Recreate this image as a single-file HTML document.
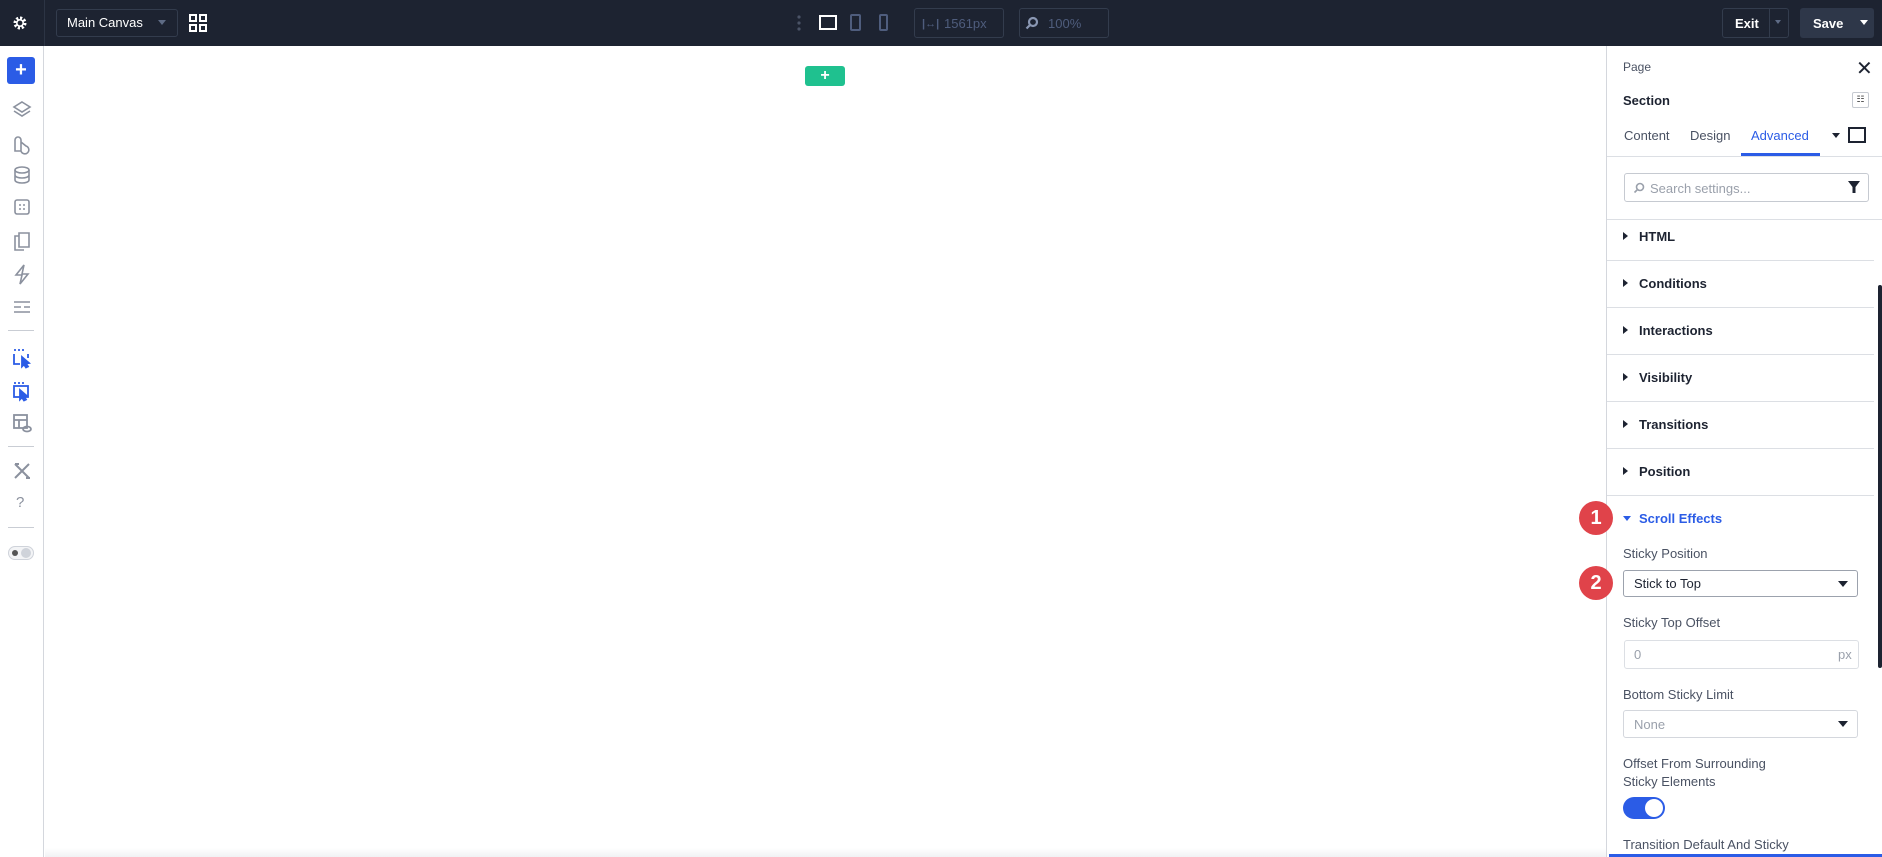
<!DOCTYPE html>
<html><head><meta charset="utf-8"><style>
*{box-sizing:border-box;margin:0;padding:0}
body{width:1882px;height:857px;overflow:hidden;background:#fff;font-family:"Liberation Sans",sans-serif;position:relative}
.a{position:absolute}
.top{left:0;top:0;width:1882px;height:46px;background:#1d2331}
.box{border:1px solid #333c4d;border-radius:3px}
.tb{color:#fff;font-size:13px}
.side{left:0;top:46px;width:44px;height:811px;border-right:1px solid #d4d7dd;background:#fff}
.sep{left:8px;width:26px;height:1px;background:#c9cdd4}
.panel{left:1606px;top:46px;width:276px;height:811px;border-left:1px solid #d4d7dd;background:#fff}
.lbl{font-size:13px;color:#4a5263}
.item{left:1639px;font-size:13px;font-weight:bold;color:#1d2331}
.tri{width:0;height:0;border-top:4px solid transparent;border-bottom:4px solid transparent;border-left:5px solid #1d2331}
.hl{left:1607px;width:267px;height:1px;background:#dcdfe4}
.badge{width:34px;height:34px;border-radius:50%;background:#e0434a;color:#fff;font-weight:bold;font-size:20px;text-align:center;line-height:34px}
.sel{border:1px solid #c6cad1;border-radius:3px;font-size:13px}
.dn{width:0;height:0;border-left:5px solid transparent;border-right:5px solid transparent;border-top:6px solid #1d2331}
</style></head><body>
<div class="a top"></div>
<div class="a" style="left:44px;top:0;width:1px;height:46px;background:#2c3444"></div>
<svg class="a" style="left:12px;top:15px" width="16" height="16" viewBox="0 0 16 16"><circle cx="8" cy="8" r="5" fill="none" stroke="#fff" stroke-width="3" stroke-dasharray="2.2 1.7"/><circle cx="8" cy="8" r="3.2" fill="none" stroke="#fff" stroke-width="1.6"/></svg>
<div class="a box" style="left:56px;top:9px;width:122px;height:28px"></div>
<div class="a tb" style="left:67px;top:15px">Main Canvas</div>
<div class="a" style="left:158px;top:20px;border-left:4px solid transparent;border-right:4px solid transparent;border-top:5px solid #5e6b85"></div>
<svg class="a" style="left:189px;top:14px" width="19" height="19"><g fill="none" stroke="#fff" stroke-width="2"><rect x="1" y="1" width="6" height="6"/><rect x="11" y="1" width="6" height="6"/><rect x="1" y="11" width="6" height="6"/><rect x="11" y="11" width="6" height="6"/></g></svg>
<svg class="a" style="left:797px;top:14px" width="4" height="18"><g fill="#4a5366"><circle cx="2" cy="3" r="1.6"/><circle cx="2" cy="9" r="1.6"/><circle cx="2" cy="15" r="1.6"/></g></svg>
<div class="a" style="left:819px;top:15px;width:18px;height:15px;border:2px solid #fff"></div>
<div class="a" style="left:850px;top:14px;width:11px;height:17px;border:2px solid #4f5d7d;border-radius:2px"></div>
<div class="a" style="left:879px;top:14px;width:9px;height:17px;border:2px solid #4f5d7d;border-radius:2px"></div>
<div class="a box" style="left:914px;top:8px;width:90px;height:30px"></div>
<div class="a" style="left:922px;top:18px;color:#4f5d7d;font-size:11px;font-weight:bold">|↔|</div>
<div class="a" style="left:944px;top:16px;color:#4f5d7d;font-size:13px">1561px</div>
<div class="a box" style="left:1019px;top:8px;width:90px;height:30px"></div>
<svg class="a" style="left:1025px;top:16px" width="14" height="14"><circle cx="8" cy="6" r="4" fill="none" stroke="#8a97b3" stroke-width="2.2"/><line x1="5" y1="9" x2="1.5" y2="12.5" stroke="#8a97b3" stroke-width="2.2"/></svg>
<div class="a" style="left:1048px;top:16px;color:#4f5d7d;font-size:13px">100%</div>
<div class="a box" style="left:1722px;top:8px;width:67px;height:30px"></div>
<div class="a" style="left:1769px;top:8px;width:1px;height:30px;background:#333c4d"></div>
<div class="a tb" style="left:1735px;top:16px;font-weight:bold">Exit</div>
<div class="a" style="left:1775px;top:20px;border-left:3px solid transparent;border-right:3px solid transparent;border-top:4px solid #5e6b85"></div>
<div class="a" style="left:1800px;top:8px;width:74px;height:30px;background:#2e3749;border-radius:3px"></div>
<div class="a tb" style="left:1813px;top:16px;font-weight:bold">Save</div>
<div class="a" style="left:1860px;top:20px;border-left:4px solid transparent;border-right:4px solid transparent;border-top:5px solid #fff"></div>

<div class="a side"></div>
<div class="a" style="left:7px;top:57px;width:28px;height:27px;background:#2b5ce6;border-radius:3px;color:#fff;font-size:20px;font-weight:bold;text-align:center;line-height:27px">+</div>
<svg class="a" style="left:10px;top:98px" width="24" height="230" fill="none" stroke="#8b919e" stroke-width="1.6">
<g transform="translate(0,0)"><path d="M12 4l8 5-8 5-8-5z M4 13l8 5 8-5"/></g>
<g transform="translate(0,33)"><path d="M5 18v-9a3 3 0 0 1 6 0v11h-6z M11 11l5 4a4 4 0 1 1-5 5"/></g>
<g transform="translate(0,67)"><ellipse cx="12" cy="5" rx="7" ry="3"/><path d="M5 5v10c0 4 14 4 14 0V5 M5 10c0 4 14 4 14 0"/></g>
<g transform="translate(0,99)"><rect x="5" y="3" width="14" height="14" rx="2"/><path d="M9 8h2M13 8h2M9 12h2M13 12h2"/></g>
<g transform="translate(0,133)"><path d="M9 8V2h10v14H9z M9 5H5v14h9"/></g>
<g transform="translate(0,166)"><path d="M14 1l-8 10h6l-2 9 8-10h-6z"/></g>
<g transform="translate(0,199)"><path d="M4 5h16 M4 10h7 M14 10h6 M4 15h16"/></g>
</svg>
<div class="a sep" style="top:330px"></div>
<svg class="a" style="left:11px;top:346px" width="22" height="90" fill="none" stroke-width="1.8">
<g stroke="#2b5ce6"><path d="M3 4h2M7 4h2M11 4h2M3 8v10h6M17 8v4"/><path d="M11 11l7 6-3 .5 2 3-2 1-2-3-2 2z" fill="#2b5ce6"/></g>
<g stroke="#2b5ce6" transform="translate(0,33)"><path d="M3 4h2M7 4h2M11 4h2"/><rect x="3" y="7" width="14" height="11"/><path d="M9 11l7 6-3 .5 2 3-2 1-2-3-2 2z" fill="#2b5ce6"/></g>
<g stroke="#8b919e" transform="translate(0,66)"><rect x="3" y="3" width="13" height="13"/><path d="M3 8h13M8 8v8"/><ellipse cx="16" cy="17" rx="4" ry="2.5"/></g>
</svg>
<div class="a sep" style="top:446px"></div>
<svg class="a" style="left:12px;top:461px" width="20" height="20" stroke="#8b919e" stroke-width="2" fill="none"><path d="M3 3l14 14M17 3L3 17M3 3l4 0M14 17h4"/></svg>
<div class="a" style="left:16px;top:494px;color:#8b919e;font-size:15px">?</div>
<div class="a sep" style="top:527px"></div>
<div class="a" style="left:8px;top:546px;width:26px;height:14px;border-radius:7px;border:1px solid #cfd3da;background:#f3f4f6"></div>
<div class="a" style="left:12px;top:550px;width:6px;height:6px;border-radius:50%;background:#555"></div>
<div class="a" style="left:21px;top:548px;width:10px;height:10px;border-radius:50%;background:#cfd3da"></div>

<div class="a" style="left:805px;top:66px;width:40px;height:20px;background:#1fc18f;border-radius:3px;color:#fff;text-align:center;font-weight:bold;font-size:16px;line-height:20px">+</div>
<div class="a" style="left:45px;top:848px;width:1561px;height:9px;background:linear-gradient(#fff,#f1f2f4)"></div>

<div class="a panel"></div>
<div class="a lbl" style="left:1623px;top:60px;font-size:12px">Page</div>
<div class="a" style="left:1856px;top:56px;font-size:20px;color:#1d2331">✕</div>
<div class="a" style="left:1623px;top:93px;font-size:13px;font-weight:bold;color:#1d2331">Section</div>
<div class="a" style="left:1852px;top:92px;width:17px;height:16px;border:1px solid #c6cad1;border-radius:2px;font-size:9px;text-align:center;line-height:13px;color:#444">☷</div>
<div class="a lbl" style="left:1624px;top:128px">Content</div>
<div class="a lbl" style="left:1690px;top:128px">Design</div>
<div class="a" style="left:1751px;top:128px;font-size:13px;color:#2b5ce6">Advanced</div>
<div class="a" style="left:1741px;top:153px;width:79px;height:3px;background:#2b5ce6"></div>
<div class="a" style="left:1832px;top:133px;border-left:4px solid transparent;border-right:4px solid transparent;border-top:5px solid #1d2331"></div>
<div class="a" style="left:1848px;top:127px;width:18px;height:16px;border:2px solid #1d2331"></div>
<div class="a" style="left:1607px;top:156px;width:275px;height:1px;background:#dcdfe4"></div>
<div class="a sel" style="left:1624px;top:173px;width:245px;height:29px"></div>
<svg class="a" style="left:1633px;top:182px" width="12" height="12"><circle cx="7" cy="5" r="3.5" fill="none" stroke="#9aa0ab" stroke-width="1.6"/><line x1="4.5" y1="7.5" x2="1.5" y2="10.5" stroke="#9aa0ab" stroke-width="1.6"/></svg>
<div class="a" style="left:1650px;top:181px;font-size:13px;color:#9aa0ab">Search settings...</div>
<svg class="a" style="left:1848px;top:181px" width="12" height="12"><path d="M0 0h12L7.5 6v6h-3V6z" fill="#1d2331"/></svg>
<div class="a" style="left:1607px;top:219px;width:275px;height:1px;background:#dcdfe4"></div>
<div class="a tri" style="left:1623px;top:232px"></div><div class="a item" style="top:229px">HTML</div>
<div class="a hl" style="top:260px"></div>
<div class="a tri" style="left:1623px;top:279px"></div><div class="a item" style="top:276px">Conditions</div>
<div class="a hl" style="top:307px"></div>
<div class="a tri" style="left:1623px;top:326px"></div><div class="a item" style="top:323px">Interactions</div>
<div class="a hl" style="top:354px"></div>
<div class="a tri" style="left:1623px;top:373px"></div><div class="a item" style="top:370px">Visibility</div>
<div class="a hl" style="top:401px"></div>
<div class="a tri" style="left:1623px;top:420px"></div><div class="a item" style="top:417px">Transitions</div>
<div class="a hl" style="top:448px"></div>
<div class="a tri" style="left:1623px;top:467px"></div><div class="a item" style="top:464px">Position</div>
<div class="a hl" style="top:495px"></div>
<div class="a" style="left:1623px;top:516px;border-left:4px solid transparent;border-right:4px solid transparent;border-top:5px solid #2b5ce6"></div>
<div class="a item" style="top:511px;color:#2b5ce6">Scroll Effects</div>
<div class="a badge" style="left:1579px;top:501px">1</div>
<div class="a badge" style="left:1579px;top:566px">2</div>
<div class="a lbl" style="left:1623px;top:546px">Sticky Position</div>
<div class="a sel" style="left:1623px;top:570px;width:235px;height:27px;border-color:#9ca2ad"></div>
<div class="a" style="left:1634px;top:576px;font-size:13px;color:#1d2331">Stick to Top</div>
<div class="a dn" style="left:1838px;top:581px"></div>
<div class="a lbl" style="left:1623px;top:615px">Sticky Top Offset</div>
<div class="a sel" style="left:1624px;top:640px;width:235px;height:29px;border-color:#dcdfe4"></div>
<div class="a" style="left:1634px;top:647px;font-size:13px;color:#9aa0ab">0</div>
<div class="a" style="left:1838px;top:647px;font-size:13px;color:#9aa0ab">px</div>
<div class="a lbl" style="left:1623px;top:687px">Bottom Sticky Limit</div>
<div class="a sel" style="left:1623px;top:710px;width:235px;height:28px;border-color:#d4d7dd"></div>
<div class="a" style="left:1634px;top:717px;font-size:13px;color:#9aa0ab">None</div>
<div class="a dn" style="left:1838px;top:721px"></div>
<div class="a lbl" style="left:1623px;top:756px">Offset From Surrounding</div>
<div class="a lbl" style="left:1623px;top:774px">Sticky Elements</div>
<div class="a" style="left:1623px;top:797px;width:42px;height:22px;border-radius:11px;background:#2b5ce6"></div>
<div class="a" style="left:1645px;top:799px;width:18px;height:18px;border-radius:50%;background:#fff"></div>
<div class="a lbl" style="left:1623px;top:837px">Transition Default And Sticky</div>
<div class="a" style="left:1609px;top:854px;width:273px;height:3px;background:#2b5ce6"></div>
<div class="a" style="left:1878px;top:285px;width:4px;height:383px;background:#1d2331;border-radius:2px"></div>
</body></html>
